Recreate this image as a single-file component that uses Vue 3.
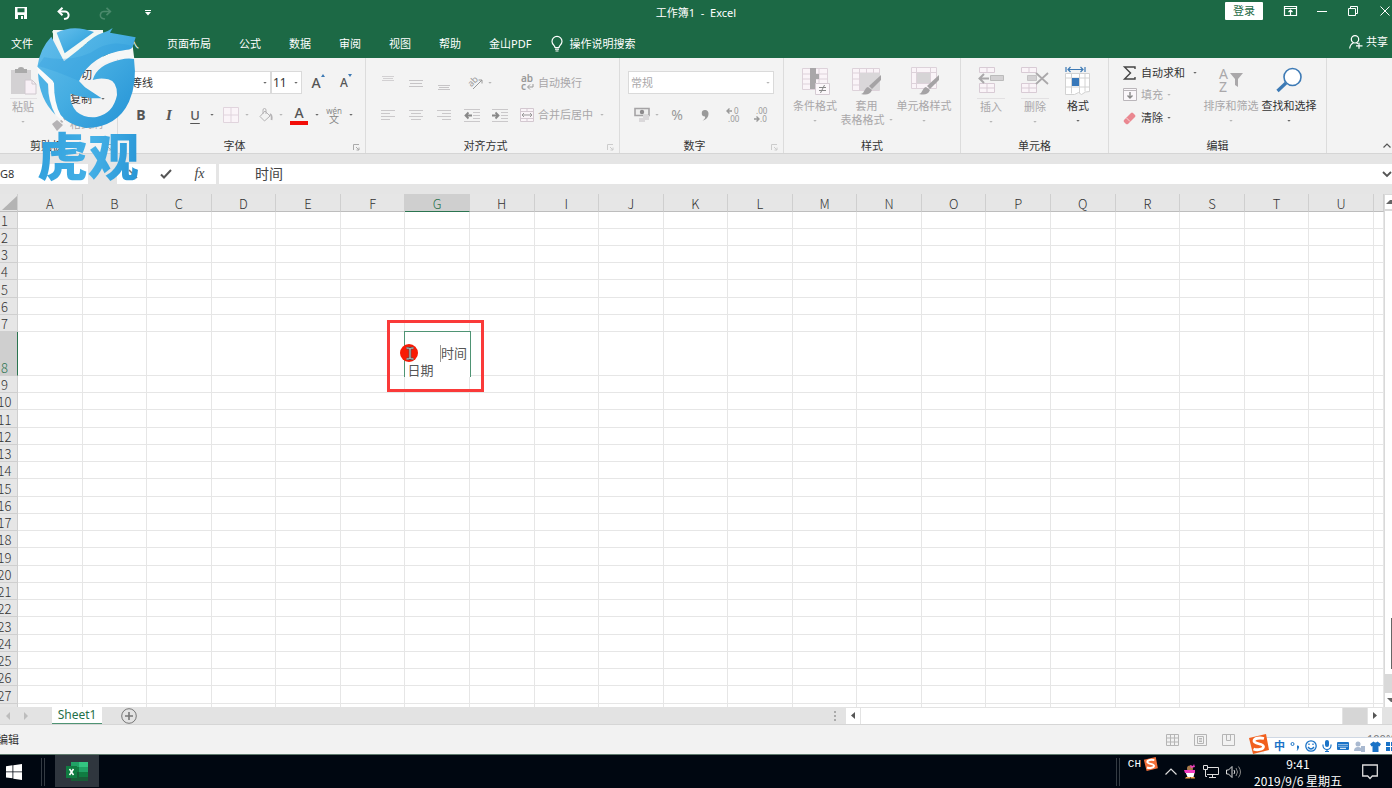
<script setup>
import { ref } from 'vue'

const tabs = ['文件', '开始', '插入', '页面布局', '公式', '数据', '审阅', '视图', '帮助', '金山PDF']
const columns = 'ABCDEFGHIJKLMNOPQRSTU'.split('')
const rowCount = 28
const nameBox = ref('G8')
const formula = ref('时间')
const fontName = ref('等线')
const fontSize = ref('11')
const numberFormat = ref('常规')

const rowClass = (n) => ({
  tall: n === 8,
  roomy: n === 5 || (n > 8 && n % 4 === 3),
})
</script>

<template>
  <div class="app">
    <header class="title-bar">
      <div class="quick">
        <button aria-label="保存">
          <svg width="12" height="12" viewBox="0 0 12 12"><path d="M0 0h12v12H0z" fill="#fff" /><path d="M2.500 1.300h7v4h-7zM3 8h6v4H3z" fill="#1c6945" /><path d="M6 9h2v3H6z" fill="#fff" /></svg>
        </button>
        <button aria-label="撤消">
          <svg width="13" height="13" viewBox="0 0 13 13" fill="none" stroke="#fff" stroke-width="2"><path d="M2 4.500h5.500a3.600 3.600 0 0 1 1 7.200L7 12" /><path d="M5.500.8 1.600 4.500l3.900 3.700" /></svg>
        </button>
        <button aria-label="恢复">
          <svg width="13" height="13" viewBox="0 0 13 13" fill="none" stroke="#4b8a6c" stroke-width="1.600"><path d="M11 4.500H5.500a3.600 3.600 0 0 0-1 7.200L6 12" /><path d="m7.500.8 3.900 3.700-3.900 3.700" /></svg>
        </button>
        <button aria-label="自定义快速访问工具栏">
          <svg width="6" height="6" viewBox="0 0 6 6" fill="#fff"><path d="M0 0h6v1H0zM0 2h6L3 5.500z" /></svg>
        </button>
      </div>
      <h1>工作簿1&nbsp; -&nbsp; Excel</h1>
      <div class="window-tools">
        <button class="login">登录</button>
        <button aria-label="功能区显示选项">
          <svg width="13" height="10" viewBox="0 0 13 10" fill="none" stroke="#fff"><path d="M.5.5h12v9H.5zM.5 2.500h12M6.500 9V4M4.500 6l2-2 2 2" stroke-width="1.200" /></svg>
        </button>
        <button aria-label="最小化">
          <svg width="10" height="10" viewBox="0 0 10 10" stroke="#fff"><path d="M0 5.500h10" /></svg>
        </button>
        <button aria-label="还原">
          <svg width="10" height="10" viewBox="0 0 10 10" fill="none" stroke="#fff"><path d="M.5 2.500h7v7h-7zM2.500 2.500v-2h7v7h-2" /></svg>
        </button>
        <button aria-label="关闭">
          <svg width="10" height="10" viewBox="0 0 10 10" stroke="#fff"><path d="m.5.5 9 9M9.500.5l-9 9" /></svg>
        </button>
      </div>
    </header>

    <nav class="tabs">
      <button v-for="t in tabs" :key="t" :class="{ active: t === '开始', file: t === '文件' }">{{ t }}</button>
      <button class="tell">
        <svg width="12" height="16" viewBox="0 0 12 16" fill="none" stroke="#fff" stroke-width="1.200"><path d="M4 11.500C4 9.500 1 8.500 1 5.400a5 5 0 0 1 10 0C11 8.500 8 9.500 8 11.500zM4 13.200h4M4.500 15h3" /></svg>
        操作说明搜索
      </button>
      <button class="share">
        <svg width="14" height="14" viewBox="0 0 14 14" fill="none" stroke="#fff" stroke-width="1.200"><circle cx="6" cy="4.300" r="3.700" /><path d="M.7 13.500C1 10 3 8.500 4.500 7.800M7.500 7.800l1.500 1M10 7.800v6M7 10.800h6.500" /></svg>
        共享
      </button>
    </nav>

    <main class="ribbon">
      <section class="group clip">
        <div class="body">
          <button class="big off split">
            <svg width="27" height="28" viewBox="0 0 27 28"><path d="M1 3h20v24H1z" fill="#d3d1d3" /><path d="M5 2h3a3 2 0 0 1 6 0h3v4H5z" fill="#aaa" /><path d="M15 13h7l4 4v10H15z" fill="#f8f0f6" stroke="#cfc8ce" /><path d="M22 13v4h4" fill="none" stroke="#cfc8ce" /></svg>
            <span>粘贴</span>
            <svg class="caret" width="5" height="3" viewBox="0 0 5 3"><path d="M0 0h5L2.500 2.500z" /></svg>
          </button>
          <div class="stack">
            <button><svg width="14" height="14" viewBox="0 0 14 14" fill="none" stroke="#777"><path d="m3 1 6 9M11 1 5 10" /><circle cx="3.500" cy="11" r="2" /><circle cx="10.500" cy="11" r="2" /></svg>剪切</button>
            <button><svg width="14" height="14" viewBox="0 0 14 14" fill="#fff" stroke="#888"><path d="M1.500.5h7v9h-7zM5.500 4.500h7v9h-7z" /></svg>复制<svg class="caret" width="5" height="3" viewBox="0 0 5 3"><path d="M0 0h5L2.500 2.500z" /></svg></button>
            <button class="off"><svg width="14" height="14" viewBox="0 0 14 14" fill="#b5b3b5"><path d="m0 7 5-4 6 5-6 6zM8 4l4-4 2 2-4 4z" /></svg>格式刷</button>
          </div>
        </div>
        <footer>剪贴板<svg class="launch" width="7" height="7" viewBox="0 0 7 7"><path d="M.5 6V.5H6M3 3l3 3M6 3.500V6H3.500" /></svg></footer>
      </section>

      <section class="group font">
        <div class="body rows">
          <div class="row r1">
            <label class="combo"><select v-model="fontName" aria-label="字体"><option>等线</option></select><svg class="caret" width="5" height="3" viewBox="0 0 5 3"><path d="M0 0h5L2.500 2.500z" /></svg></label>
            <label class="combo size"><select v-model="fontSize" aria-label="字号"><option>11</option></select><svg class="caret" width="5" height="3" viewBox="0 0 5 3"><path d="M0 0h5L2.500 2.500z" /></svg></label>
            <button class="grow" aria-label="增大字号"><b>A</b><svg width="4" height="3" viewBox="0 0 4 3"><path d="M0 3h4L2 0z" fill="#3d7ab5" /></svg></button>
            <button class="grow less" aria-label="减小字号"><b>A</b><svg width="4" height="3" viewBox="0 0 4 3"><path d="M0 0h4L2 3z" fill="#3d7ab5" /></svg></button>
          </div>
          <div class="row r2">
            <button class="bold">B</button>
            <button class="italic">I</button>
            <button class="under">U</button>
            <svg class="caret" width="5" height="3" viewBox="0 0 5 3"><path d="M0 0h5L2.500 2.500z" /></svg>
            <button aria-label="边框"><svg width="16" height="16" viewBox="0 0 16 16" fill="#faf4f8" stroke="#e0d4dd"><path d="M.5.5h15v15H.5zM8 .5v15M.5 8h15" /></svg></button>
            <svg class="caret dim" width="5" height="3" viewBox="0 0 5 3"><path d="M0 0h5L2.500 2.500z" /></svg>
            <button aria-label="填充颜色"><svg width="14" height="15" viewBox="0 0 14 15" fill="none" stroke="#b5b3b5"><path d="m1 8.500 5-5.500 5 5-5.500 5zM4 6V2a1.500 1.500 0 0 1 3 0v4" /><path d="M11 6c2 1 2 3 1.500 6" stroke-width="1.800" /></svg></button>
            <svg class="caret dim" width="5" height="3" viewBox="0 0 5 3"><path d="M0 0h5L2.500 2.500z" /></svg>
            <button class="color">A</button>
            <svg class="caret" width="5" height="3" viewBox="0 0 5 3"><path d="M0 0h5L2.500 2.500z" /></svg>
            <button class="pinyin"><span>wén</span><span>文</span></button>
            <svg class="caret" width="5" height="3" viewBox="0 0 5 3"><path d="M0 0h5L2.500 2.500z" /></svg>
          </div>
        </div>
        <footer>字体<svg class="launch" width="7" height="7" viewBox="0 0 7 7"><path d="M.5 6V.5H6M3 3l3 3M6 3.500V6H3.500" /></svg></footer>
      </section>

      <section class="group align">
        <div class="body rows off">
          <div class="row a1">
            <button aria-label="顶端对齐"><svg width="14" height="16" viewBox="0 0 14 16" stroke="#d2d0d2"><path d="M1 1.500h12M2 3.500h10M1 5.500h12" /></svg></button>
            <button aria-label="垂直居中"><svg width="14" height="16" viewBox="0 0 14 16" stroke="#c6c4c6"><path d="M0 5.500h14M1 8.500h12M0 11.500h14" /></svg></button>
            <button aria-label="底端对齐"><svg width="14" height="16" viewBox="0 0 14 16" stroke="#c6c4c6"><path d="M1 10.500h12M2 12.500h10M1 14.500h12" /></svg></button>
            <button class="tight" aria-label="方向"><svg width="14" height="14" viewBox="0 0 14 14"><text x="0" y="8" font-size="9" transform="rotate(-45 5 7)" fill="#999">ab</text><path d="m4 13 9-9M9.500 4H13v3.500" fill="none" stroke="#999" /></svg><svg class="caret" width="5" height="3" viewBox="0 0 5 3"><path d="M0 0h5L2.500 2.500z" /></svg></button>
            <button class="wide"><svg width="13" height="16" viewBox="0 0 13 16"><text x="0" y="7" font-size="10" font-weight="600" fill="#999">ab</text><text x="0" y="15" font-size="10" font-weight="600" fill="#999">c</text><path d="M12 9v3H7m2-2.500L6.500 12 9 14.500" fill="none" stroke="#999" /></svg>自动换行</button>
          </div>
          <div class="row a2">
            <button aria-label="左对齐"><svg width="14" height="12" viewBox="0 0 14 12" stroke="#cac8ca"><path d="M0 1.500h14M0 4.500h9M0 7.500h14M0 10.500h9" /></svg></button>
            <button aria-label="居中"><svg width="14" height="12" viewBox="0 0 14 12" stroke="#cac8ca"><path d="M0 1.500h14M2 4.500h10M0 7.500h14M2 10.500h10" /></svg></button>
            <button aria-label="右对齐"><svg width="14" height="12" viewBox="0 0 14 12" stroke="#cac8ca"><path d="M0 1.500h14M5 4.500h9M0 7.500h14M5 10.500h9" /></svg></button>
            <button aria-label="减少缩进量"><svg width="16" height="13" viewBox="0 0 16 13" stroke="#cac8ca"><path d="M0 .5h16M9 3.500h7M9 6.500h7M9 9.500h7M0 12.500h16" /><path d="M8 6.500H1.500M4.500 3.500l-3 3 3 3" fill="none" stroke="#888" stroke-width="1.800" /></svg></button>
            <button aria-label="增加缩进量"><svg width="16" height="13" viewBox="0 0 16 13" stroke="#cac8ca"><path d="M0 .5h16M9 3.500h7M9 6.500h7M9 9.500h7M0 12.500h16" /><path d="M0 6.500h6.500M3.500 3.500l3 3-3 3" fill="none" stroke="#888" stroke-width="1.800" /></svg></button>
            <button class="wide"><svg width="14" height="14" viewBox="0 0 14 14" fill="#faf4f8" stroke="#d3c8d0"><path d="M.5.5h13v13H.5zM.5 3.500h13M.5 10.500h13M7 .5v3M7 10.500v3" /><path d="M2 7h10M4 5 2 7l2 2M10 5l2 2-2 2" fill="none" stroke="#999" /></svg>合并后居中<svg class="caret" width="5" height="3" viewBox="0 0 5 3"><path d="M0 0h5L2.500 2.500z" /></svg></button>
          </div>
        </div>
        <footer>对齐方式<svg class="launch dim" width="7" height="7" viewBox="0 0 7 7"><path d="M.5 6V.5H6M3 3l3 3M6 3.500V6H3.500" /></svg></footer>
      </section>

      <section class="group number">
        <div class="body rows off">
          <div class="row n1">
            <label class="combo"><select v-model="numberFormat" aria-label="数字格式"><option>常规</option></select><svg class="caret" width="5" height="3" viewBox="0 0 5 3"><path d="M0 0h5L2.500 2.500z" /></svg></label>
          </div>
          <div class="row n2">
            <button class="tight" aria-label="会计数字格式"><svg width="16" height="16" viewBox="0 0 16 16"><path d="M1 1.500h14v7H1z" fill="#eee" stroke="#a5a3a5" stroke-width="1.600" /><circle cx="8" cy="5" r="2.200" fill="#8d8b8d" /><path d="M9 8h6v5H9zM5 11h6v4H5z" fill="#dad8da" /></svg><svg class="caret" width="5" height="3" viewBox="0 0 5 3"><path d="M0 0h5L2.500 2.500z" /></svg></button>
            <button class="pct">%</button>
            <button aria-label="千位分隔样式"><svg width="8" height="11" viewBox="0 0 8 11"><path d="M4 0a3.300 3.300 0 0 1 3.500 3.500C7.500 7.500 5 10 1.500 10.500 4 9 4.500 7.500 4 6.500A3.200 3.200 0 0 1 4 0z" fill="#999" /></svg></button>
            <button aria-label="增加小数位数"><svg width="14" height="16" viewBox="0 0 14 16"><path d="M6 4H1m2.500-2.500L1 4l2.500 2.500" fill="none" stroke="#999" stroke-width="1.400" /><text x="8" y="7" font-size="8" fill="#999">0</text><text x="2" y="15" font-size="8" fill="#999">.00</text></svg></button>
            <button aria-label="减少小数位数"><svg width="14" height="16" viewBox="0 0 14 16"><text x="2" y="7" font-size="8" fill="#999">.00</text><path d="M0 12h5M2.500 9.500 5 12l-2.500 2.500" fill="none" stroke="#999" stroke-width="1.400" /><text x="6" y="15" font-size="8" fill="#999">.0</text></svg></button>
          </div>
        </div>
        <footer>数字<svg class="launch dim" width="7" height="7" viewBox="0 0 7 7"><path d="M.5 6V.5H6M3 3l3 3M6 3.500V6H3.500" /></svg></footer>
      </section>

      <section class="group styles">
        <div class="body off">
          <button class="big">
            <svg width="29" height="28" viewBox="0 0 29 28"><path d="M1.500 1.500h25v21h-25zM1.500 7h25M1.500 12h25M1.500 17h25M9.500 1.500v21M18 1.500v21" fill="#faf4f8" stroke="#ddd2da" /><path d="M9 1h6v6h3v5h-3v10H9z" fill="#a9a7a9" /><path d="M14.500 16.500h14v11h-14z" fill="#fbf7fa" stroke="#d5cbd3" /><path d="M18 20.500h7M18 23.500h7M23.500 18l-4 8" stroke="#888" fill="none" /></svg>
            <span>条件格式</span>
            <svg class="caret" width="5" height="3" viewBox="0 0 5 3"><path d="M0 0h5L2.500 2.500z" /></svg>
          </button>
          <button class="big">
            <svg width="29" height="28" viewBox="0 0 29 28"><path d="M.5 1.500h27v22H.5zM.5 6h27M.5 12h27M.5 18h27M7.500 1.500v22M14.500 1.500v22M21.500 1.500v22" fill="#faf4f8" stroke="#ddd2da" /><path d="M8 6h20v17H8z" fill="#d9d7d9" /><path d="M29 8v5l-9 9-3-3z" fill="#a5a3a5" /><path d="M16 20l4 3c-2 5-6 5-11 4 4-1 3-6 7-7z" fill="#a5a3a5" /></svg>
            <span>套用</span>
            <span class="second">表格格式<svg class="caret" width="5" height="3" viewBox="0 0 5 3"><path d="M0 0h5L2.500 2.500z" /></svg></span>
          </button>
          <button class="big">
            <svg width="29" height="28" viewBox="0 0 29 28"><path d="M1.500.5h25v21h-25zM1.500 5.500h25M1.500 16.500h25M6.500.5v21M20.500.5v21" fill="#faf4f8" stroke="#ddd2da" /><path d="M7 6h13v10H7z" fill="#d6d4d6" /><path d="M29 8v5l-9 9-3-3z" fill="#a5a3a5" /><path d="M16 20l4 3c-2 5-6 5-11 4 4-1 3-6 7-7z" fill="#a5a3a5" /></svg>
            <span>单元格样式</span>
            <svg class="caret" width="5" height="3" viewBox="0 0 5 3"><path d="M0 0h5L2.500 2.500z" /></svg>
          </button>
        </div>
        <footer>样式</footer>
      </section>

      <section class="group cells">
        <div class="body">
          <button class="big off split">
            <svg width="28" height="28" viewBox="0 0 28 28"><path d="M2.500.5h15v5h-15zM10 .5v5M2.500 16.500h15v9h-15zM10 16.500v9M2.500 21h15" fill="#faf4f8" stroke="#d8cbd5" /><path d="M13.500 8.500h13v5h-13z" fill="#d3d1d3" stroke="#bbb" /><path d="M12 11.500H2M7 7l-4.500 4.500L7 16" fill="none" stroke="#aaa8aa" stroke-width="2" /></svg>
            <span>插入</span>
            <svg class="caret" width="5" height="3" viewBox="0 0 5 3"><path d="M0 0h5L2.500 2.500z" /></svg>
          </button>
          <button class="big off split">
            <svg width="28" height="28" viewBox="0 0 28 28"><path d="M.5.5h15v5h-15zM8 .5v5M.5 16.500h15v9H.5zM8 16.500v9M.5 21h15" fill="#faf4f8" stroke="#d8cbd5" /><path d="M6.500 8.500h9v5h-9z" fill="#d3d1d3" stroke="#c5c3c5" /><path d="m15 6 12 11M27 6 15 17" stroke="#aaa8aa" stroke-width="1.800" /></svg>
            <span>删除</span>
            <svg class="caret" width="5" height="3" viewBox="0 0 5 3"><path d="M0 0h5L2.500 2.500z" /></svg>
          </button>
          <button class="big">
            <svg width="26" height="28" viewBox="0 0 26 28"><path d="M1 0v5M20 0v5M3 2.500h15M5.500 0 3 2.500 5.500 5M15.500 0 18 2.500 15.500 5" fill="none" stroke="#3d7ab5" stroke-width="1.200" /><path d="M.5 6.500h24v18l-4 .5-4 2.500-3-2-4 2H.5zM.5 11h24M.5 20h24M6.500 6.500v20M14.500 6.500V26M20 6.500v18" fill="#fff" stroke="#d2d2d2" /><path d="M7 11h7v8H7z" fill="#3878ba" /></svg>
            <span>格式</span>
            <svg class="caret" width="5" height="3" viewBox="0 0 5 3"><path d="M0 0h5L2.500 2.500z" /></svg>
          </button>
        </div>
        <footer>单元格</footer>
      </section>

      <section class="group edit">
        <div class="body">
          <div class="stack">
            <button><svg width="14" height="14" viewBox="0 0 14 14" fill="none" stroke="#444" stroke-width="1.400"><path d="M12 3V1H1.500l6 6-6 6H12v-2" /></svg>自动求和<svg class="caret far" width="5" height="3" viewBox="0 0 5 3"><path d="M0 0h5L2.500 2.500z" /></svg></button>
            <button class="off"><svg width="14" height="14" viewBox="0 0 14 14" fill="#faf7fa" stroke="#bab6ba"><path d="M.5.5h13v12H.5zM.5 2.500h13" /><path d="M7 4v6M4.500 7.500 7 10l2.500-2.500" stroke="#888" stroke-width="1.400" /></svg>填充<svg class="caret" width="5" height="3" viewBox="0 0 5 3"><path d="M0 0h5L2.500 2.500z" /></svg></button>
            <button><svg width="14" height="14" viewBox="0 0 14 14"><path d="m1 9 7-7q1-1 2 0l2 2q1 1 0 2l-7 7q-1 .5-2 0l-2-2q-.7-1 0-2z" fill="#ea8790" /><path d="m3.500 7 3.500 3.500" stroke="#f8d5d8" /></svg>清除<svg class="caret" width="5" height="3" viewBox="0 0 5 3"><path d="M0 0h5L2.500 2.500z" /></svg></button>
          </div>
          <button class="big off">
            <svg width="28" height="28" viewBox="0 0 28 28"><text x="2" y="12" font-size="14" fill="#aaa8aa">A</text><text x="2" y="25" font-size="14" fill="#aaa8aa">Z</text><path d="M13 6h13l-5 6v8l-3-2v-6z" fill="#aaa8aa" /></svg>
            <span>排序和筛选</span>
            <svg class="caret" width="5" height="3" viewBox="0 0 5 3"><path d="M0 0h5L2.500 2.500z" /></svg>
          </button>
          <button class="big">
            <svg width="28" height="28" viewBox="0 0 28 28" fill="none" stroke="#3d7ab5"><circle cx="17.500" cy="10" r="8.500" fill="#fff" stroke-width="1.600" /><path d="m11 16-8.500 8" stroke-width="3.200" /></svg>
            <span>查找和选择</span>
            <svg class="caret" width="5" height="3" viewBox="0 0 5 3"><path d="M0 0h5L2.500 2.500z" /></svg>
          </button>
        </div>
        <footer>编辑</footer>
      </section>
      <div class="rest"><button aria-label="折叠功能区"><svg width="8" height="5" viewBox="0 0 8 5" fill="none" stroke="#555" stroke-width="1.200"><path d="m.5 4.500 3.500-3.500 3.500 3.500" /></svg></button></div>
    </main>

    <div class="formula-bar">
      <label class="name"><input v-model="nameBox" aria-label="名称框"><svg class="caret" width="5" height="3" viewBox="0 0 5 3"><path d="M0 0h5L2.500 2.500z" /></svg></label>
      <div class="fx">
        <button aria-label="取消"><svg width="10" height="10" viewBox="0 0 10 10" stroke="#777" stroke-width="1.600"><path d="m1 1 8 8M9 1 1 9" /></svg></button>
        <button aria-label="输入"><svg width="12" height="10" viewBox="0 0 12 10" fill="none" stroke="#555" stroke-width="2"><path d="m1 5.500 3 3L11 1" /></svg></button>
        <button class="fn">fx</button>
      </div>
      <label class="formula"><input v-model="formula" aria-label="编辑栏"><svg width="10" height="6" viewBox="0 0 10 6" fill="none" stroke="#555" stroke-width="1.800"><path d="m1 1 4 4 4-4" /></svg></label>
    </div>

    <div class="sheet">
      <div class="cells-view">
        <table>
          <thead>
            <tr>
              <th class="corner"><svg width="15" height="14" viewBox="0 0 15 14"><path d="M15 0v14H0z" fill="#b3b3b3" /></svg></th>
              <th v-for="c in columns" :key="c" :class="{ on: c === 'G' }">{{ c }}</th>
              <th class="cut"></th>
            </tr>
          </thead>
          <tbody>
            <tr v-for="n in rowCount" :key="n" :class="rowClass(n)">
              <th :class="{ on: n === 8 }">{{ n }}</th>
              <td v-for="c in columns" :key="c">
                <div v-if="n === 8 && c === 'G'" class="editor">
                  <span class="first">时间</span>
                  <span>日期</span>
                  <svg class="pointer" width="18" height="18" viewBox="0 0 18 18"><circle cx="9" cy="9" r="9" fill="#f81a04" /><path d="M6.500 4q2.500 0 3.500 1 1-1 3.500-1M10 5v9M6.500 15q2.500 0 3.500-1 1 1 3.500 1" fill="none" stroke="#555" stroke-width="2.600" /><path d="M6.500 4q2.500 0 3.500 1 1-1 3.500-1M10 5v9M6.500 15q2.500 0 3.500-1 1 1 3.500 1" fill="none" stroke="#ccc" /></svg>
                  <div class="mark"></div>
                </div>
              </td>
              <td></td>
            </tr>
          </tbody>
        </table>
      </div>
      <div class="v-scroll">
        <button aria-label="向上滚动"><svg width="7" height="4" viewBox="0 0 7 4"><path d="M1 4h6V0H5z" fill="#666" /></svg></button>
        <div class="v-thumb"></div>
        <div class="v-track"></div>
        <button aria-label="向下滚动"><svg width="7" height="4" viewBox="0 0 7 4"><path d="M2 0h5v4H6z" fill="#666" /></svg></button>
      </div>
    </div>

    <div class="sheet-tabs">
      <button class="arrow" aria-label="上一张"><svg width="4" height="8" viewBox="0 0 4 8"><path d="M4 0v8L0 4z" fill="#bdbdbd" /></svg></button>
      <button class="arrow" aria-label="下一张"><svg width="4" height="8" viewBox="0 0 4 8"><path d="M0 0v8l4-4z" fill="#bdbdbd" /></svg></button>
      <button class="sheet-name">Sheet1</button>
      <button class="add" aria-label="新工作表"><svg width="16" height="16" viewBox="0 0 16 16" fill="none" stroke="#777"><circle cx="8" cy="8" r="7.300" /><path d="M8 4v8M4 8h8" stroke-width="1.600" /></svg></button>
      <svg class="dots" width="2" height="10" viewBox="0 0 2 10" fill="#aaa"><path d="M0 0h2v2H0zM0 4h2v2H0zM0 8h2v2H0z" /></svg>
      <div class="h-scroll">
        <button aria-label="向左滚动"><svg width="4" height="7" viewBox="0 0 4 7"><path d="M4 0v7L0 3.500z" fill="#555" /></svg></button>
        <div class="h-thumb"></div>
        <div class="h-track"></div>
        <button aria-label="向右滚动"><svg width="4" height="7" viewBox="0 0 4 7"><path d="M0 0v7l4-3.500z" fill="#555" /></svg></button>
      </div>
    </div>

    <div class="status">
      <span class="mode">编辑</span>
      <div class="views">
        <button aria-label="普通"><svg width="13" height="12" viewBox="0 0 13 12" fill="none" stroke="#b5b5b5"><path d="M.5.5h12v11H.5zM.5 4h12M.5 8h12M4.500.5v11M8.500.5v11" /></svg></button>
        <button aria-label="页面布局视图"><svg width="13" height="12" viewBox="0 0 13 12" fill="none" stroke="#b5b5b5"><path d="M.5.5h12v11H.5zM3.500 2.500h6v7h-6zM5 4.500h3M5 6h3M5 7.500h3" /></svg></button>
        <button aria-label="分页预览"><svg width="13" height="12" viewBox="0 0 13 12" fill="none" stroke="#b5b5b5"><path d="M.5.5h12v11H.5zM4.500.5v6h4v-6" /></svg></button>
      </div>
      <span class="zoom">100%</span>
      <div class="ime">
        <svg class="sogou" width="21" height="20" viewBox="0 0 21 20"><path d="M1 4 18 0l3 16-16 4z" fill="#f15f1d" /><path d="M16 4.500C12 3.500 6 4 6 7s9.500 2.500 9.500 5.500S9 16.500 5.500 15" fill="none" stroke="#fff" stroke-width="2.800" /></svg>
        <span class="zh">中</span>
        <svg width="10" height="10" viewBox="0 0 10 10"><circle cx="2.500" cy="3" r="1.500" fill="none" stroke="#1a73c7" /><path d="M7 4.500q2.500-.5 2 2T6.500 10q1.500-2 .5-3z" fill="#1a73c7" /></svg>
        <svg width="12" height="12" viewBox="0 0 12 12" fill="none" stroke="#1a73c7" stroke-width="1.300"><circle cx="6" cy="6" r="5.200" /><path d="M4 3.500V5M8 3.500V5M3 7q3 4 6 0" /></svg>
        <svg width="10" height="12" viewBox="0 0 10 12"><rect x="3" width="4" height="7" rx="2" fill="#1a73c7" /><path d="M1 4.500v1a4 4 0 0 0 8 0v-1M5 9.500V12M3 11.500h4" fill="none" stroke="#1a73c7" stroke-width="1.200" /></svg>
        <svg width="12" height="10" viewBox="0 0 12 10"><rect y="1" width="12" height="8" rx="1" fill="#1a73c7" /><path d="M1.500 3.500h9M1.500 5.300h9" stroke="#fff" stroke-dasharray="1 1" /><path d="M3 7.300h6" stroke="#fff" /></svg>
        <svg width="11" height="11" viewBox="0 0 11 11" fill="#a9b9d0"><circle cx="4" cy="3" r="2.500" /><path d="M0 10q0-4 4-4 2 0 3 1v3zM7 5h4v6H7z" /></svg>
        <svg width="11" height="11" viewBox="0 0 11 11"><path d="M0 3 3.500.5q2 2 4 0L11 3 9.500 5.500l-1-.5v6h-6V5l-1 .5z" fill="#1a73c7" /></svg>
        <svg width="9" height="9" viewBox="0 0 9 9" fill="#1a73c7"><path d="M0 0h4v4H0zM5 0h4v4H5zM0 5h4v4H0zM5 5h4v4H5z" /></svg>
      </div>
    </div>

    <footer class="taskbar">
      <button class="start" aria-label="开始"><svg width="16" height="16" viewBox="0 0 16 16" fill="#fff"><path d="m0 2.300 6.500-1v6.200H0zM7.300 1.200 16 0v7.500H7.300zM0 8.300h6.500v6L0 13.500zM7.300 8.300H16V16l-8.700-1.300z" /></svg></button>
      <i class="grip"></i>
      <button class="task" aria-label="Excel">
        <svg width="22" height="21" viewBox="0 0 22 21"><path d="M5 1h8v5H5z" fill="#21a366" /><path d="M13 1h9v5h-9z" fill="#33c481" /><path d="M5 6h8v5H5z" fill="#107c41" /><path d="M13 6h9v5h-9z" fill="#21a366" /><path d="M5 11h8v9H5z" fill="#185c37" /><path d="M13 11h9v5h-9z" fill="#107c41" /><path d="M13 16h9v4h-9z" fill="#185c37" /><path d="M0 5h11v12H0z" fill="#107c41" /><path d="m3.500 8 4 6M7.500 8l-4 6" stroke="#fff" stroke-width="1.500" /></svg>
      </button>
      <div class="tray">
        <i class="grip"></i>
        <span class="lang">CH</span>
        <svg class="raised" width="15" height="14" viewBox="0 0 21 20"><path d="M1 4 18 0l3 16-16 4z" fill="#f4703a" /><path d="M16 4.500C12 3.500 6 4 6 7s9.500 2.500 9.500 5.500S9 16.500 5.500 15" fill="none" stroke="#fff" stroke-width="2.800" /></svg>
        <svg width="12" height="7" viewBox="0 0 12 7" fill="none" stroke="#ddd" stroke-width="1.200"><path d="m.5 6.500 5.500-5.500 5.500 5.500" /></svg>
        <svg width="12" height="15" viewBox="0 0 12 15"><circle cx="6" cy="4.500" r="3" fill="#a8794a" /><path d="M1 7h10l-1.500 6h-6z" fill="#fff" /><path d="M0 6h11v3H1zM6 1l3 1 1-2 1 3-4 1z" fill="#f03cc0" /><path d="M2 13h4v1.500H1zM6.500 13h4l.5 1.500H6.500z" fill="#f3a54b" /></svg>
        <svg width="16" height="14" viewBox="0 0 16 14" fill="none" stroke="#ddd"><path d="M4 2.500h11.500v7H4M9.500 9.500v3M6 12.500h7M.5.5h4v4h-4zM2.500 4.500v7H4" /></svg>
        <svg width="16" height="14" viewBox="0 0 16 14" fill="none" stroke="#ddd"><path d="M.5 5h2L6 1.500v11L2.500 9h-2z" /><path d="M8 5q1.500 2 0 4" /><path d="M10 3q3 4 0 8M12.500 1.500q4 5.500 0 11" stroke="#888" /></svg>
        <div class="clock"><span>9:41</span><span>2019/9/6 星期五</span></div>
        <svg width="16" height="16" viewBox="0 0 16 16" fill="none" stroke="#ddd" stroke-width="1.300"><path d="M.7 1h14.600v11h-5L8 14.500 5.700 12h-5z" /></svg>
      </div>
    </footer>

    <div class="watermark">
      <svg width="115" height="110" viewBox="0 0 345 330">
        <defs><linearGradient id="sky" x1="0" y1="0" x2="1" y2="1"><stop offset="0" stop-color="#66bfec" /><stop offset=".5" stop-color="#45ade2" /><stop offset="1" stop-color="#2392d5" /></linearGradient></defs>
        <path d="M66 34h16l22 66 76-64h42Q195 45 160 78L102 124z" fill="#f2f8f4" />
        <path d="M200 122Q235 94 290 86 306 84 308 78L313 118Q270 106 200 138z" fill="#f5f7f7" />
        <path d="M21 138 24 160 56 192Q56 245 78 286L112 316Q74 260 72 190L68 182z" fill="#fafafa" />
        <path d="M80 38Q130 12 192 36L104 100z" fill="url(#sky)" />
        <path d="M24 160 54 192Q54 245 76 284 28 238 24 160z" fill="#4db2e5" />
        <path d="M64 50 102 124 160 78Q195 45 215 40 235 34 248 24L240 38 317 52 308 80Q306 88 290 89 180 104 147 183L165 202 215 235Q165 236 122 221 118 250 140 275 165 295 200 291 250 280 261 225 262 185 235 178 210 172 188 180 200 134 270 119 295 113 312 117 322 190 297 245 262 322 168 324 115 315 92 285 72 250 72 190L68 182 22 140Q30 85 64 50z" fill="url(#sky)" />
        <path d="M42 112Q140 130 206 84 250 60 308 78 306 88 290 89 180 104 147 183 72 150 24 138z" fill="#2b98d9" opacity=".3" />
      </svg>
      <div class="brand">虎观</div>
    </div>
  </div>
</template>

<style>
body { margin: 0; overflow: hidden; }
</style>

<style scoped>
.app { position: relative; display: flex; flex-direction: column; height: 100vh; overflow: hidden; background: #e5e5e5; color: #333; font: 11px/14px "Noto Sans", "Noto Sans CJK SC", sans-serif; }
button, input, select { font: inherit; color: inherit; background: none; border: 0; padding: 0; margin: 0; border-radius: 0; outline: 0; }
button { display: flex; align-items: center; justify-content: center; white-space: nowrap; }
svg { flex: none; display: block; overflow: visible; }
svg text { font-family: "Noto Sans", sans-serif; }
.caret { width: 4px; height: 2px; fill: #666; }
.off { color: #a9a7a9; }
.off .caret, .caret.dim { fill: #b5b5b5; }

.title-bar { display: grid; grid-template-columns: 1fr auto 1fr; height: 30px; background: #1c6945; color: #fff; flex: none; }
.title-bar > * { height: 26px; }
.title-bar h1 { margin: 0; font-size: 11px; font-weight: 400; line-height: 26px; }
.quick { display: grid; grid-template-columns: 42px 42px 42px 44px; }
.window-tools { display: grid; grid-template-columns: 38px 54px 10px 52px 11px; align-items: center; justify-content: end; height: 22px; padding-right: 2px; }
.login { height: 18px; background: #fff; color: #1c6945; border-radius: 1px; }

.tabs { display: flex; height: 28px; background: #1c6945; color: #fff; flex: none; }
.tabs button { padding: 0 14px; }
.tabs .file { padding: 0 20px 0 11px; }
.tabs .active { background: #f3f3f3; color: #1c6945; }
.tabs .tell { gap: 6px; padding: 0 6px; }
.tabs .share { margin-left: auto; padding: 0 4px 4px; gap: 3px; }

.ribbon { display: flex; height: 96px; background: #f3f3f3; border-bottom: 1px solid #d5d5d5; flex: none; box-sizing: border-box; }
.group { position: relative; flex: none; box-sizing: border-box; display: flex; flex-direction: column; border-right: 1px solid #dcdcdc; }
.body { display: flex; height: 80px; }
.group > footer { height: 15px; line-height: 16px; text-align: center; color: #333; }
.launch { position: absolute; right: 5px; bottom: 2px; fill: none; stroke: #aaa; }
.launch.dim { stroke: #ccc; }
.clip { width: 118px; }
.clip > footer { padding-right: 24px; }
.font { width: 248px; }
.font > footer { padding-right: 14px; }
.align { width: 254px; }
.align > footer { padding-right: 14px; }
.number { width: 164px; }
.number > footer { padding-right: 14px; }
.styles { width: 177px; }
.cells { width: 148px; }
.edit { width: 218px; }
.rest { flex: 1; display: flex; align-items: flex-end; justify-content: flex-end; padding: 0 1px 5px 0; }

.big { flex-direction: column; justify-content: flex-start; padding-top: 9px; line-height: 14px; }
.big span { margin-top: 4px; text-align: center; }
.big .caret { margin-top: 7px; }
.big .second { display: flex; align-items: center; gap: 4px; margin-top: 0; }
.big .second .caret { margin: 0; }
.big.split > svg:first-child { padding-bottom: 3px; border-bottom: 1px solid #e2e0e2; }
.big.split span { margin-top: 1px; }
.clip .big { width: 46px; }
.stack { display: grid; grid-template-rows: 23px 22px 24px; padding-top: 3px; }
.stack button { justify-content: flex-start; gap: 4px; }
.clip .stack { padding: 5px 0 0 6px; grid-template-rows: 24px 24px 26px; }
.clip .stack .caret { margin-left: 5px; }
.styles .body { display: grid; grid-template-columns: 50px 53px 62px; padding-left: 6px; }
.cells .body { display: grid; grid-template-columns: 44px 44px 42px; padding-left: 8px; }
.edit .body { display: grid; grid-template-columns: 79px 58px 58px; padding-left: 14px; }
.edit .stack .far { margin-left: 4px; }

.rows { flex-direction: column; }
.row { display: grid; align-items: center; box-sizing: border-box; height: 42px; }
.row:first-child { padding-top: 13px; height: 36px; }
.row > button { min-width: 0; }
.row > .caret { justify-self: center; }
.combo { position: relative; display: flex; align-items: center; justify-content: flex-end; box-sizing: border-box; height: 23px; background: #fff; border: 1px solid #dadada; padding-right: 3px; }
.combo select { position: absolute; inset: 0; width: 100%; padding-left: 2px; appearance: none; }
.combo .caret { position: relative; pointer-events: none; }
.r1 { grid-template-columns: 150px 31px 28px 28px; padding-left: 3px; }
.r1 .combo:first-child select { padding-left: 9px; }
.r1 .size select { font-size: 12px; padding-left: 1px; }
.grow { align-items: flex-start; padding-left: 4px; }
.grow b { font-size: 14px; font-weight: 500; line-height: 18px; color: #555; }
.less b { font-size: 12px; }
.r2 { grid-template-columns: 28px 28px 24px 10px 28px 4px 30px 4px 32px 4px 30px 4px; padding-left: 9px; }
.bold { font-size: 14px; font-weight: 700; color: #555; }
.italic { font: italic 700 15px/18px "Liberation Serif", serif; color: #555; }
.under { font-size: 13px; font-weight: 500; text-decoration: underline; color: #555; text-underline-offset: 3px; }
.r2 > button:nth-child(7) { padding-left: 3px; }
.color { justify-self: center; width: 18px; height: 19px; line-height: 14px; border-bottom: 4px solid #f20d08; font-size: 14px; font-weight: 500; color: #555; }
.pinyin { flex-direction: column; color: #888; font-size: 8px; line-height: 7px; }
.pinyin span:last-child { font-size: 10px; line-height: 10px; }
.a1 { grid-template-columns: 28px 28px 28px 44px 90px; padding-left: 8px; }
.a2 { grid-template-columns: 28px 28px 28px 28px 28px 90px; padding-left: 8px; }
.tight { gap: 5px; }
.wide { justify-content: flex-start; gap: 4px; }
.a1 .wide { padding-left: 19px; }
.a2 .wide { padding-left: 6px; }
.a2 .wide .caret { margin-left: 3px; }
.n1 { padding: 0 9px 0 8px; }
.n2 { grid-template-columns: 34px 28px 28px 28px 28px; padding-left: 9px; }
.pct { font: 14px/16px "Noto Sans", sans-serif; color: #999; }

.formula-bar { display: flex; height: 20px; padding: 10px 0; flex: none; }
.name { display: flex; align-items: center; width: 88px; background: #fff; }
.name input { width: 80px; }
.fx { display: grid; grid-template-columns: 32px 34px 33px; margin-left: 29px; background: #fff; }
.fn { font: italic 14px/18px "Liberation Serif", serif; color: #444; }
.formula { flex: 1; display: flex; align-items: center; margin-left: 3px; background: #fff; }
.formula input { flex: 1; min-width: 0; padding-left: 36px; font-size: 14px; line-height: 20px; height: 20px; color: #444; }

.sheet { display: flex; flex: 1; min-height: 0; }
.cells-view { flex: 1; overflow: hidden; background: #fff; }
table { width: calc(100% + 8px); margin-left: -8px; table-layout: fixed; border-spacing: 0; }
th, td { box-sizing: border-box; height: 17px; padding: 0; border-right: 1px solid #e6e6e6; border-bottom: 1px solid #e6e6e6; }
th { position: relative; vertical-align: bottom; background: #e6e6e6; color: #333; font: 300 13px/15px "Noto Sans CJK SC", sans-serif; }
thead th { height: 18px; border-color: #cfcfcf; border-bottom-color: #bdbdbd; }
tbody th { border-color: #cfcfcf; line-height: 14px; }
.corner { width: 26px; }
.corner svg { margin-left: 10px; margin-bottom: 1px; }
.cut { width: 10px; }
thead .on { background: #cfcfcf; color: #2b7450; border-bottom-color: #2b7450; }
tbody .on { background: #cfcfcf; color: #2b7450; border-right: 1px solid #2b7450; }
.roomy th, .roomy td { height: 18px; }
.tall th, .tall td { height: 44px; }
.editor { position: relative; display: flex; flex-direction: column; box-sizing: border-box; height: 46px; margin: -2px -2px -2px -1px; padding: 13px 3px 0 2px; background: #fff; border: 1px solid #4f9474; border-bottom: 0; font-size: 13px; line-height: 17px; color: #555; white-space: nowrap; }
.first { align-self: flex-end; border-left: 1px solid #999; }
.pointer { position: absolute; left: -5px; top: 12px; }
.mark { position: absolute; left: -18px; right: -14px; top: -12px; height: 66px; border: 3px solid #fa3a39; }
.v-scroll { display: flex; flex-direction: column; width: 7px; padding-left: 1px; background: #d9d9d9; overflow: hidden; }
.v-scroll button { height: 14px; width: 7px; background: #fff; flex: none; }
.v-scroll button:first-child { margin: 1px 0 2px; }
.v-thumb { flex: 1; background: linear-gradient(#666, #666) right 0 bottom 5px / 1px 51px no-repeat #fff; }
.v-track { height: 19px; }

.sheet-tabs { display: flex; align-items: center; height: 18px; box-sizing: border-box; background: #e3e3e3; border-bottom: 1px solid #d6d6d6; flex: none; }
.arrow { width: 18px; padding-right: 3px; }
.sheet-name { align-self: stretch; width: 50px; margin-left: 16px; background: #fff; border-bottom: 1px solid #4f9474; color: #1f7048; font-size: 12px; }
.add { margin-left: 19px; }
.dots { margin-left: auto; margin-right: 10px; }
.h-scroll { display: flex; gap: 1px; width: 536px; height: 16px; margin-right: 10px; }
.h-scroll button { width: 14px; background: #fff; }
.h-thumb { flex: 1; background: #fff; }
.h-track { width: 24px; background: #d6d6d6; }

.status { position: relative; display: flex; align-items: center; height: 30px; background: #f2f2f2; border-bottom: 1px solid #5f7a6d; box-sizing: border-box; flex: none; }
.mode { margin-left: -3px; }
.views { display: flex; gap: 15px; margin-left: auto; margin-right: 132px; }
.zoom { width: 25px; align-self: flex-start; margin-top: 7px; color: #777; }
.ime { position: absolute; right: 0; bottom: 0; display: flex; align-items: center; gap: 5px; height: 17px; width: 128px; padding-left: 18px; background: #fff; border-top: 1px solid #cfd8e4; box-sizing: border-box; overflow: visible; }
.sogou { position: absolute; left: -16px; bottom: 0; }
.zh { width: 11px; color: #1a73c7; font-weight: 700; margin-left: -8px; }

.taskbar { display: flex; align-items: center; height: 33px; background: #000711; color: #fff; flex: none; }
.start { width: 28px; }
.grip { width: 2px; height: 28px; border-left: 1px solid #343b42; border-right: 1px solid #343b42; margin-left: 13px; }
.task { width: 44px; align-self: stretch; margin: 0 0 1px 10px; background: #2f363e; }
.tray { display: flex; align-items: center; margin-left: auto; padding-right: 14px; gap: 7px; }
.tray .grip { margin: 0 1px 0 0; }
.lang { margin: -16px -5px 0 0; font: 11px/14px "Liberation Mono", monospace; }
.raised { margin-top: -16px; }
.clock { display: flex; flex-direction: column; width: 88px; margin: 0 13px 0 5px; text-align: center; font: 12px/17px "Noto Sans CJK SC", sans-serif; white-space: nowrap; }

.watermark { position: absolute; left: 30px; top: 20px; width: 115px; pointer-events: none; }
.brand { margin-left: 7px; font-size: 51px; font-weight: 900; line-height: 52px; white-space: nowrap; background: linear-gradient(100deg, #2f9fdc, #45b0e6 50%, #2492d4); background-clip: text; color: transparent; }
</style>
